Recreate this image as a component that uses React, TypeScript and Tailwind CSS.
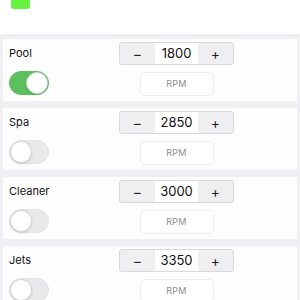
import { useState } from "react"

interface Pump {
  name: string
  rpm: number
  on: boolean
}

const pumps: Pump[] = [
  { name: "Pool", rpm: 1800, on: true },
  { name: "Spa", rpm: 2850, on: false },
  { name: "Cleaner", rpm: 3000, on: false },
  { name: "Jets", rpm: 3350, on: false },
]

function Toggle({ on, onChange }: { on: boolean; onChange: () => void }) {
  return (
    <button
      onClick={onChange}
      className={`relative h-[24px] w-[40px] rounded-full border ${
        on ? "border-[#5cc05e] bg-[#5cc05e]" : "border-[#e4e4e6] bg-[#e9e9eb]"
      }`}
    >
      <span
        className={`absolute top-[0px] h-[22px] w-[22px] rounded-full border border-[#d6d6d8] bg-white shadow-sm ${
          on ? "left-[16px]" : "left-[0px]"
        }`}
      />
    </button>
  )
}

function PumpCard({ pump }: { pump: Pump }) {
  const [on, setOn] = useState(pump.on)
  const [rpm, setRpm] = useState(pump.rpm)

  return (
    <div className="mx-[3px] flex h-[62px] bg-[#fdfdfd] px-[6px] pt-[3px]">
      <div className="flex w-[110px] flex-col">
        <div className="flex h-[23px] items-center text-[11px] text-[#111]">{pump.name}</div>
        <div className="mt-[6px]">
          <Toggle on={on} onChange={() => setOn(!on)} />
        </div>
      </div>
      <div className="flex w-[115px] flex-col items-center">
        <div className="flex h-[23px] w-[115px] overflow-hidden rounded-[3px] border border-[#d9d9dd] bg-[#efeff2]">
          <button
            onClick={() => setRpm(rpm - 50)}
            className="flex w-[35px] items-center justify-center text-[14px] text-[#222]"
          >
            −
          </button>
          <div className="flex flex-1 items-center justify-center bg-white text-[13px] text-[#111]">
            {rpm}
          </div>
          <button
            onClick={() => setRpm(rpm + 50)}
            className="flex w-[35px] items-center justify-center text-[14px] text-[#222]"
          >
            +
          </button>
        </div>
        <button className="mt-[7px] h-[24px] w-[74px] rounded-[5px] border border-[#ececee] bg-white text-[9px] tracking-[0.3px] text-[#8c8c90]">
          RPM
        </button>
      </div>
    </div>
  )
}

export default function App() {
  return (
    <div className="h-[300px] w-[300px] overflow-hidden bg-[#f0f0f4] font-['Inter',sans-serif]">
      <div className="h-[34px] bg-white px-[11px]">
        <div className="h-[9px] w-[19px] rounded-b-[3px] bg-[#66f23d]" />
      </div>
      <div className="flex flex-col gap-[7px] pt-[5px]">
        {pumps.map((p) => (
          <PumpCard key={p.name} pump={p} />
        ))}
      </div>
    </div>
  )
}
